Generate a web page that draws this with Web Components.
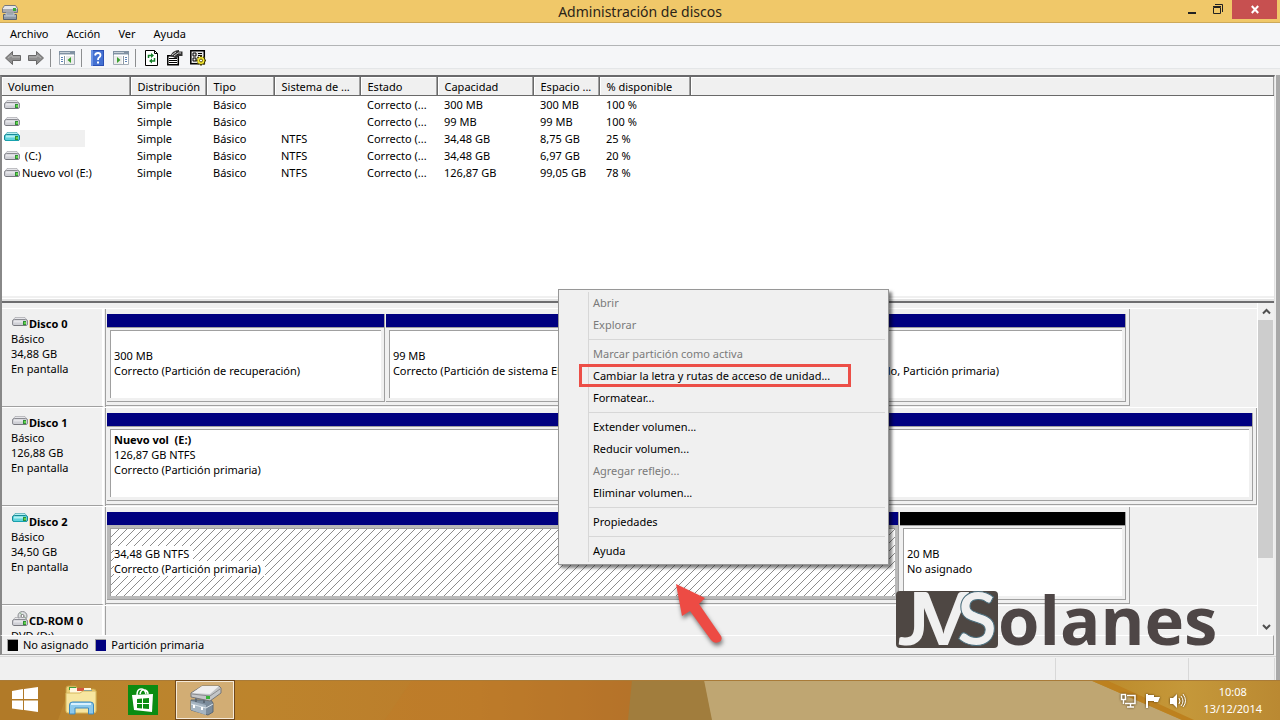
<!DOCTYPE html>
<html lang="es">
<head>
<meta charset="utf-8">
<title>Administración de discos</title>
<style>
html, body { margin: 0; height: 100%; overflow: hidden; }
body { font: 11px/15px "Noto Sans", "Open Sans", sans-serif; color: #000; background: #f0f0f0; }
</style>
</head>
<body>
<disk-manager></disk-manager>
<script>
const define = (name, html, setup) => {
  const t = document.createElement('template');
  t.innerHTML = html;
  customElements.define(name, class extends HTMLElement {
    connectedCallback() {
      if (this.shadowRoot) return;
      this.attachShadow({ mode: 'open' }).append(t.content.cloneNode(true));
      if (setup) setup.call(this, this.shadowRoot);
    }
  });
};

define('drive-icon', `
<style>
:host { display: block; width: 16px; height: 11px; flex: none; --top: #e6e6ea; --front: #cfd0d6; --edge: #8b8c92; --low: #77787e; }
:host([kind="active"]) { --top: #b4f0f2; --front: #5fd3dc; --edge: #168a96; --low: #17a2ae; }
:host([kind="cd"]) { height: 17px; }
svg { display: block; overflow: visible; }
</style><svg></svg>`, function (root) {
  const kind = this.getAttribute('kind');
  const cd = kind === 'cd';
  const svg = root.querySelector('svg');
  svg.setAttribute('width', 16);
  svg.setAttribute('height', cd ? 17 : 11);
  svg.setAttribute('viewBox', cd ? '0 -6 16 17' : kind === 'active' ? '0 2 16 11' : '0 0 16 11');
  svg.innerHTML = `${cd ? '<circle cx="10.500" cy="0" r="4.500" fill="#dcdfe0" stroke="#8a8c90"/><path d="M10.500 0L8-3.500M10.500 0l3.500 2" stroke="#86b98a"/><circle cx="10.500" cy="0" r="1.500" fill="#fff" stroke="#777"/>' : ''}
  <path d="M3 1.500h10l2 3H1z" fill="var(--top)" fill-opacity="${cd ? .6 : 1}" stroke="var(--edge)" stroke-opacity=".5"/>
  <path d="M.5 5q0-1.500 2-1.500h11q2 0 2 1.500v3q0 1.500-1.500 1.500h-12Q.5 9.500.5 8z" fill="var(--front)" stroke="var(--edge)"/>
  <path d="M2 4.500h9v2H2z" fill="var(--top)"/><path d="M2 9.500h12" stroke="var(--low)"/>
  <path d="M11 5h3v4h-3z" fill="#2f8f35"/><path d="M12 6h2v2h-2z" fill="#62d14b"/>`;
});

define('title-bar', `
<style>
:host { display: grid; grid-template-columns: 1fr auto 1fr; height: 22px; background: #f0c869; border-bottom: 1px solid #cda95a; }
h1 { margin: 0; font: 14px/23px "Noto Sans", "Open Sans", sans-serif; color: #2b2418; }
.icon { margin: 4px 0 0 2px; display: block; }
.buttons { display: flex; justify-content: flex-end; align-items: flex-start; padding-right: 3px; }
button { border: 0; padding: 0; width: 26px; height: 19px; background: none; display: block; }
button svg { display: block; margin: auto; }
.close { width: 45px; background: #c75050; margin-left: 1px; }
</style>
<svg class="icon" width="16" height="16" viewBox="0 0 16 16"><path d="M2.500 1.500h11l2 3v4H.5v-4z" fill="#e6e6e8" stroke="#77787c"/><path d="M1 5h14v3H1z" fill="#a9abb0"/><path d="M11 4h3v3h-3z" fill="#38a83a"/><path d="M1.500 10.500h13v5h-13z" fill="#8d98a5" stroke="#59636f"/><path d="M4 9h8v2H4zM2 12h12" fill="#7a8591" stroke="#c2cad2"/></svg>
<h1>Administración de discos</h1>
<div class="buttons">
<button aria-label="Minimizar"><svg width="8" height="17"><path d="M0 11h8v2H0z" fill="#222"/></svg></button>
<button aria-label="Restaurar"><svg width="10" height="19" fill="none" stroke="#222"><path d="M.5 7.500h7v6h-7zM0 6.500h8M2 4.500h7.500V12"/></svg></button>
<button class="close" aria-label="Cerrar"><svg width="8" height="19"><path d="M.8 6l6.400 7M7.200 6L.8 13" stroke="#fff" stroke-width="2"/></svg></button>
</div>`);

define('menu-bar', `
<style>
:host { display: flex; gap: 18px; padding-left: 10px; height: 22px; background: #f5f6f8; border-bottom: 1px solid #b2b4b6; }
button { all: unset; line-height: 22px; }
</style>
<button>Archivo</button><button>Acción</button><button>Ver</button><button>Ayuda</button>`);

define('tool-bar', `
<style>
:host { display: flex; align-items: center; height: 21px; padding: 1px 0 0 5px; background: #f5f6f8; border-bottom: 1px solid #e4e6e8; }
button { all: unset; display: block; min-width: 16px; }
button + button { margin-left: 7px; }
i { width: 1px; height: 18px; background: #8c8e90; margin: 0 8px 0 6px; }
i + button { margin-left: 0; }
svg { display: block; }
</style>
<button aria-label="Atrás"><svg width="16" height="16"><path d="M.5 8L7.500 1.500v4h8v5h-8v4z" fill="#8e8e8e" stroke="#686868"/><path d="M3 8l4-3v2h8" fill="none" stroke="#b5b5b5"/></svg></button>
<button aria-label="Adelante"><svg width="16" height="16"><path d="M15.500 8L8.500 1.500v4h-8v5h8v4z" fill="#8e8e8e" stroke="#686868"/><path d="M13 8L9 5v2H1" fill="none" stroke="#b5b5b5"/></svg></button>
<i></i>
<button aria-label="Mostrar árbol"><svg width="16" height="14"><path d="M.5.5h15v13H.5z" fill="#fff" stroke="#a3acb5"/><path d="M0 0h16v4H0z" fill="#8192a3"/><path d="M1 1.500h10M1 3.500h14" stroke="#c8d0d8"/><path d="M5.500 5v8" stroke="#8b97a3"/><path d="M2 6.500h2M2 8.500h2M2 10.500h2" stroke="#5b82b8"/><path d="M7 5h8v8H7z" fill="#ececec"/><path d="M12 6v6L8.500 9z" fill="#3ba02f"/></svg></button>
<i></i>
<button aria-label="Ayuda"><svg width="14" height="16"><path d="M1 0h13v16H1z" fill="#2a4fb4"/><path d="M2 1h11v14H2z" fill="#4370d2"/><path d="M1 0h2v16H1z" fill="#6a92e4"/><path d="M5 5.500q.5-2.500 3-2.500t2.500 2.300q0 1.500-1.500 2.200-1 .6-1 2.500" fill="none" stroke="#fff" stroke-width="1.800"/><path d="M7 11.500h2v2H7z" fill="#fff"/></svg></button>
<button aria-label="Mostrar panel"><svg width="16" height="14"><path d="M.5.5h15v13H.5z" fill="#fff" stroke="#a3acb5"/><path d="M0 0h16v4H0z" fill="#8192a3"/><path d="M1 1.500h10M1 3.500h14" stroke="#c8d0d8"/><path d="M10.500 5v8" stroke="#8b97a3"/><path d="M12 6.500h2M12 8.500h2M12 10.500h2" stroke="#5b82b8"/><path d="M1 5h8v8H1z" fill="#ececec"/><path d="M4 6v6l3.500-3z" fill="#3ba02f"/></svg></button>
<i></i>
<button aria-label="Actualizar"><svg width="16" height="16"><path d="M1.500.5h9l3 3v12h-12z" fill="#fff" stroke="#000"/><path d="M10.500.5v3h3" fill="none" stroke="#000"/><path d="M4.500 8V5.500h4M10.500 8v3h-4" fill="none" stroke="#15802a" stroke-width="1.500"/><path d="M7 3v5l3-2.500zM8 8.500v5l-3-2.500z" fill="#15802a"/></svg></button>
<button aria-label="Propiedades"><svg width="16" height="16"><path d="M.8 5.800h10.500v9H.8z" fill="#fff" stroke="#000" stroke-width="1.500"/><path d="M2 8.500h8M2 10.500h8M2 12.500h8" stroke="#000"/><path d="M3 6l3-4 3-1.500 3-.5v1.500h3.500V6H12l-3 2.500L6 7z" fill="#333"/><path d="M5 5l4-3M7 6l4-3h3" stroke="#d8d8d8"/></svg></button>
<button aria-label="Configurar"><svg width="16" height="16"><path d="M.8.8h13.500v13H.8z" fill="#e6e6e6" stroke="#000" stroke-width="1.500"/><path d="M3 3h3v3H3zM3 8h3v3H3z" fill="none" stroke="#000"/><path d="M8 3.500h4M8 5.500h4" stroke="#000"/><path d="M11 5.500v10M6 10.500h10M7.500 7l7 7M14.500 7l-7 7" stroke="#4b4200" stroke-width="2"/><circle cx="11" cy="10.500" r="3.500" fill="#f6e934"/><circle cx="11" cy="10.500" r="1.500" fill="#fff" stroke="#5e5400"/></svg></button>`);

const volumes = [
  ['', '', 'Simple', 'Básico', '', 'Correcto (...', '300 MB', '300 MB', '100 %'],
  ['', '', 'Simple', 'Básico', '', 'Correcto (...', '99 MB', '99 MB', '100 %'],
  ['active', '', 'Simple', 'Básico', 'NTFS', 'Correcto (...', '34,48 GB', '8,75 GB', '25 %'],
  ['', '\u00a0(C:)', 'Simple', 'Básico', 'NTFS', 'Correcto (...', '34,48 GB', '6,97 GB', '20 %'],
  ['', 'Nuevo vol (E:)', 'Simple', 'Básico', 'NTFS', 'Correcto (...', '126,87 GB', '99,05 GB', '78 %']
];
define('volume-list', `
<style>
:host { display: flex; flex-direction: column; box-sizing: border-box; min-height: 0; overflow: hidden; background: #fff; border: solid; border-width: 2px 1px 0 2px; border-color: #69696b #e3e3e3 #696969 #888; }
table { width: 100%; border-collapse: collapse; table-layout: fixed; }
th, td { font-weight: 400; text-align: left; padding: 0 0 0 7px; white-space: nowrap; overflow: hidden; height: 17px; line-height: 17px; }
th { padding-top: 1px; background: #f0f0f0; border-right: 1px solid #696969; box-shadow: inset -1px 0 #a0a0a0, inset 1px 1px #fff; border-bottom: 1px solid #696969; }
th:first-child { padding-left: 6px; }
th:last-child { border-right: 0; }
.cell { display: flex; align-items: center; gap: 2px; }
td:first-child { padding-left: 2px; }
.hidden-name { width: 65px; height: 17px; margin-left: -2px; background: #f0f0f0; }
.edge { margin-top: auto; height: 2px; background: #f0f0f0; border-bottom: 1px solid #fff; }
.split { height: 2px; background: #e3e3e3; border-bottom: 2px solid #6d6d6f; }
</style>
<table><colgroup><col style="width:128px"><col style="width:76px"><col style="width:68px"><col style="width:86px"><col style="width:77px"><col style="width:96px"><col style="width:66px"><col style="width:91px"><col></colgroup>
<thead><tr><th>Volumen</th><th>Distribución</th><th>Tipo</th><th>Sistema de ...</th><th>Estado</th><th>Capacidad</th><th>Espacio ...</th><th>% disponible</th><th></th></tr></thead>
<tbody></tbody></table><div class="edge"></div><div class="split"></div>`, function (root) {
  root.querySelector('tbody').innerHTML = volumes.map(([kind, name, ...rest]) =>
    `<tr><td><div class="cell"><drive-icon kind="${kind}"></drive-icon>${kind ? '<span class="hidden-name"></span>' : name}</div></td>${rest.map(v => `<td>${v}</td>`).join('')}<td></td></tr>`).join('');
});

define('disk-row', `
<style>
:host { display: flex; flex: none; height: 98px; border-top: 1px solid #fff; }
.label { flex: none; width: 90px; height: 90px; padding: 7px 0 0 10px; border-right: 2px solid #fff; border-bottom: 1px solid #a0a0a0; }
.info { margin-left: -1px; }
.name { display: flex; align-items: flex-start; gap: 1px; font-weight: 700; white-space: nowrap; height: 15px; }
.area { flex: 1; min-width: 0; overflow: hidden; border-left: 1px solid #a0a0a0; margin-left: 1px; }
.frame { display: flex; box-sizing: border-box; height: 97px; padding: 5px 3px 3px 1px; gap: 1px; border: solid #a0a0a0; border-width: 0 1px 1px 0; width: var(--share, 100%); }
:host([empty]) .frame { display: none; }
:host([kind="cd"]) drive-icon { margin-top: -3px; }
</style>
<div class="label"><div class="name"></div><div class="info"><slot name="info"></slot></div></div>
<div class="area"><div class="frame"><slot></slot></div></div>`, function (root) {
  root.querySelector('.name').innerHTML = `<drive-icon kind="${this.getAttribute('kind') || ''}"></drive-icon><span>${this.getAttribute('name')}</span>`;
});

define('disk-partition', `
<style>
:host { display: flex; flex-direction: column; flex: var(--size, 1) 1 0; min-width: 0; border: solid #a0a0a0; border-width: 0 1px 1px 0; }
.bar { height: 13px; background: #000080; border-bottom: 1px solid #a0a0a0; flex: none; }
:host([unallocated]) .bar { background: #000; }
.box { position: relative; flex: 1; margin: 2px 3px 3px; border: solid #a0a0a0; border-width: 1px 0 0 1px; background: #fff; padding: 2px 0 0 3px; overflow: hidden; white-space: pre; }
svg { display: none; position: absolute; inset: 0; width: 100%; height: 100%; }
:host([selected]) .bar { border-color: #b4b4b4; }
:host([selected]) { background: #b9b9b9; }
:host([selected]) svg { display: block; }
.text { position: relative; }
.line { height: 15px; }
.line span { background: #fff; display: inline-block; padding-right: 4px; }
.line.bold { font-weight: 700; }
</style>
<div class="bar"></div>
<div class="box"><svg><defs><pattern id="hatch" width="8" height="8" patternUnits="userSpaceOnUse"><path d="M0 7h1v1H0zM1 6h1v1H1zM2 5h1v1H2zM3 4h1v1H3zM4 3h1v1H4zM5 2h1v1H5zM6 1h1v1H6zM7 0h1v1H7z" fill="#8c8c8c" shape-rendering="crispEdges"/></pattern></defs><rect width="100%" height="100%" fill="url(#hatch)"/></svg><div class="text"></div></div>`, function (root) {
  root.querySelector('.text').innerHTML = ['name', 'size', 'state'].map((k) =>
    `<div class="line${k === 'name' ? ' bold' : ''}"><span>${this.getAttribute(k) || ''}</span></div>`).join('');
});

define('scroll-bar', `
<style>
:host { display: flex; flex-direction: column; width: 16px; flex: none; border-left: 1px solid #fff; background: #f0f0f0; }
button { all: unset; height: 17px; flex: none; }
svg { display: block; margin: auto; }
.track { flex: 1; }
.thumb { height: 80%; margin-right: 1px; background: #cdcdcd; }
</style>
<button aria-label="Subir"><svg width="9" height="17"><path d="M1 10.500L4.500 7 8 10.500" fill="none" stroke="#505050" stroke-width="2"/></svg></button>
<div class="track"><div class="thumb"></div></div>
<button aria-label="Bajar"><svg width="9" height="17"><path d="M1 7l3.500 3.500L8 7" fill="none" stroke="#505050" stroke-width="2"/></svg></button>`);

define('disk-view', `
<style>
:host { display: flex; min-height: 0; border: solid; border-width: 0 2px; border-color: #888; border-right-color: #ececec; }
.rows { flex: 1; min-width: 0; overflow: hidden; padding-top: 5px; display: flex; flex-direction: column; }
p { margin: 0; }
</style>
<div class="rows">
<disk-row name="Disco 0" style="--share:89%"><p slot="info">Básico</p><p slot="info">34,88 GB</p><p slot="info">En pantalla</p>
<disk-partition style="--size:279" size="300 MB" state="Correcto (Partición de recuperación)"></disk-partition>
<disk-partition style="--size:238" size="99 MB" state="Correcto (Partición de sistema EFI)"></disk-partition>
<disk-partition style="--size:505" state="Correcto (Arranque, Archivo de paginación, Volcado, Partición primaria)"></disk-partition></disk-row>
<disk-row name="Disco 1" style="--share:100%"><p slot="info">Básico</p><p slot="info">126,88 GB</p><p slot="info">En pantalla</p>
<disk-partition name="Nuevo vol  (E:)" size="126,87 GB NTFS" state="Correcto (Partición primaria)"></disk-partition></disk-row>
<disk-row name="Disco 2" kind="active" style="--share:89%"><p slot="info">Básico</p><p slot="info">34,50 GB</p><p slot="info">En pantalla</p>
<disk-partition selected style="--size:793" size="34,48 GB NTFS" state="Correcto (Partición primaria)"></disk-partition>
<disk-partition unallocated style="--size:226" size="20 MB" state="No asignado"></disk-partition></disk-row>
<disk-row name="CD-ROM 0" kind="cd" empty><p slot="info">DVD (D:)</p></disk-row>
</div>
<scroll-bar></scroll-bar>`);

define('disk-legend', `
<style>
:host { display: flex; align-items: center; gap: 5px; padding: 0 0 1px 5px; height: 17px; margin-right: 2px; border: solid; border-width: 1px 1px 1px 2px; border-color: #fff #a0a0a0 #a0a0a0 #888; }
i { width: 10px; height: 11px; background: #000; border: solid #a0a0a0; border-width: 1px 0 0 1px; }
.primary { background: #000080; margin-left: 2px; }
</style>
<i></i><span>No asignado</span><i class="primary"></i><span>Partición primaria</span>`);

define('status-bar', `
<style>
:host { display: flex; justify-content: flex-end; height: 22px; margin-top: 1px; padding: 1px 1px 0 0; border-top: 1px solid #d8d8d8; }
i { border-left: 1px solid #d8d8d8; width: 132px; }
i + i { width: 85px; border-right: 1px solid #d8d8d8; }
</style><i></i><i></i>`);

define('context-menu', `
<style>
:host { display: block; position: absolute; left: 558px; top: 289px; width: 329px; padding: 2px 0; background: #f0f0f0; border: 1px solid #979797; box-shadow: 3px 3px 3px rgba(0,0,0,.5); }
.list { background: linear-gradient(90deg, transparent 29px, #d7d7d7 29px, #d7d7d7 30px, transparent 30px); }
button { all: unset; display: block; box-sizing: border-box; width: 100%; height: 22px; line-height: 20px; padding-left: 34px; position: relative; white-space: nowrap; }
button:disabled { color: #7a7a7a; }
hr { height: 1px; margin: 3px 3px 3px 30px; border: 0; background: #d7d7d7; }
.marked::after { content: ""; position: absolute; left: 20px; top: -1px; width: 266px; height: 17px; border: 3px solid #ec4e47; }
</style>
<div class="list">
<button disabled>Abrir</button><button disabled>Explorar</button><hr>
<button disabled>Marcar partición como activa</button><button class="marked">Cambiar la letra y rutas de acceso de unidad...</button><button>Formatear...</button><hr>
<button>Extender volumen...</button><button>Reducir volumen...</button><button disabled>Agregar reflejo...</button><button>Eliminar volumen...</button><hr>
<button>Propiedades</button><hr><button>Ayuda</button>
</div>`);

define('pointer-arrow', `
<style>:host { display: block; position: absolute; left: 670px; top: 580px; filter: drop-shadow(1px 3px 2px rgba(0,0,0,.5)); } svg { display: block; }</style>
<svg width="56" height="66"><path d="M6 4L35 18 29 24 51 56Q53 60 49 62 44 64 41 60L20 31 12 36z" fill="#ed4b44"/></svg>`);

define('brand-logo', `
<style>:host { display: block; position: absolute; left: 894px; top: 586px; } svg { display: block; overflow: visible; }
text { font: 700 67px "Open Sans", sans-serif; fill: #4e4646; }
.mark text { fill: #f0f0f0; font: 700 73px Lato, sans-serif; }
.mark .s { stroke: #4a6d7c; stroke-width: 1; }</style>
<svg width="326" height="66"><rect x="2" y="5" width="102" height="57" rx="4" fill="#4e4743"/>
<g class="mark"><text x="4" y="59">J</text><text x="24" y="59">V</text><text class="s" x="63" y="59">S</text></g>
<text x="104" y="59">olanes</text></svg>`);

define('task-bar', `
<style>
:host { display: flex; position: relative; height: 40px; flex: none; align-items: center; color: #fff; overflow: hidden; }
.wall { position: absolute; inset: 0; width: 100%; height: 100%; }
.apps, .tray { position: relative; display: flex; align-items: center; }
.tray { margin-left: auto; padding-right: 18px; gap: 8px; }
button { all: unset; display: flex; align-items: center; justify-content: center; }
.start { width: 50px; } .pin { width: 62px; }
.open { box-sizing: border-box; width: 60px; height: 40px; margin-left: 1px; border: 1px solid #70481b; box-shadow: inset 0 0 0 1px #f6ead8; background: #d2ad74; }
.tray svg { filter: drop-shadow(0 0 1px #4d3510); margin-top: 1px; }
time { text-align: center; line-height: 17px; margin-left: 9px; }
time span { display: block; }
</style>
<svg class="wall" viewBox="0 0 1280 40" preserveAspectRatio="none">
<defs><linearGradient id="w"><stop offset="0" stop-color="#b9842f"/><stop offset=".4" stop-color="#bd842c"/><stop offset=".75" stop-color="#bb7c2b"/><stop offset="1" stop-color="#ad6d2b"/></linearGradient>
<linearGradient id="g"><stop offset="0" stop-color="#bb8929"/><stop offset=".5" stop-color="#c5983a"/><stop offset="1" stop-color="#ba8932"/></linearGradient></defs>
<path d="M0 0h640v40H0z" fill="url(#w)"/><path d="M0 0h72L58 40H0z" fill="#b17a28"/><path d="M412 0h220v40H385z" fill="#c07a28" opacity=".4"/>
<path d="M632 0h75l6 40h-85z" fill="#a17d3d"/><path d="M704 0h576v40H712z" fill="#bfa672"/>
<path d="M1090 0h190v40h-98z" fill="url(#g)"/><path d="M1090 0h16l88 40h-12z" fill="#bd811f"/><path d="M0 .5h1280" stroke="#a97b38"/></svg>
<div class="apps">
<button class="start" aria-label="Inicio"><svg width="28" height="26"><path d="M1 4l11-2v10H1zM13 2l14-2v12H13zM1 13.500h11V23L1 21.500zM13 13.500h14V25l-14-2z" fill="#fff"/></svg></button>
<button class="pin" aria-label="Explorador"><svg width="32" height="32"><path d="M1 4q0-2 2-2h8l2 3h16q2 0 2 2v20H1z" fill="#ecd078" stroke="#bd9840"/><path d="M4 3h7v3H4z" fill="#3e9e3b"/><path d="M5 4h21v6H5z" fill="#fff8e0"/><path d="M12 4h7v3h-7z" fill="#d4573e"/><path d="M19 6h8v3h-8z" fill="#3e8ed0"/><path d="M1 9h14l3-2h13v20q0 2-2 2H3q-2 0-2-2z" fill="#f7e6a0" stroke="#d6b75d"/><path d="M4.500 30V21q0-3 3-3h18q3 0 3 3v9h-5v-6H10v6z" fill="#8cc9eb" stroke="#3f89bd"/><path d="M6 20h20" stroke="#d8f1ff" stroke-width="2"/></svg></button>
<button class="pin" aria-label="Tienda"><svg width="30" height="30"><path d="M0 0h30v30H0z" fill="#0b8c12"/><path d="M4 10l21-1-1 18-18-2z" fill="#fff"/><path d="M9 10q0-6 4-6t5 5M12 9q1-5 5-4 3 1 3 4" fill="none" stroke="#fff" stroke-width="1.500"/><path d="M9 14l5-.5v4.500H9zM15 13.500l6-.5v5h-6zM9 19h5v4.500L9 23zM15 19h6v5l-6-.5z" fill="#0b8c12"/></svg></button>
<button class="open" aria-label="Administración de discos"><svg width="34" height="32"><path d="M3 16h20l2 3v9l-5 3-17-5z" fill="#7c8c9b" stroke="#5b6874"/><path d="M3 17l15 4v10L3 26z" fill="#a6b5c2"/><path d="M8 18v-3q0-2 8 0v4" fill="none" stroke="#5d6975" stroke-width="2"/><path d="M3 20l15 4 7-4" fill="none" stroke="#dce4ea"/><path d="M6 21v3M14 23v3" stroke="#fff" stroke-width="2"/><path d="M3 9L14 2h17l2 2v5L22 17 3 13z" fill="#c3c5c8" stroke="#777"/><path d="M4 9L14 2h17l-9 8z" fill="#eeeeef"/><path d="M4 10l18 2 10-7" fill="none" stroke="#8a8b8e"/><path d="M18 12h4v3h-4z" fill="#37b336"/></svg></button>
</div>
<div class="tray">
<svg width="17" height="16" fill="none" stroke="#fff" stroke-width="1.500"><path d="M1.500 1.500h4v5h-4zM3.500 7v4M7 2.500h8v8H5M10.500 11v2.500M7 14h7"/></svg>
<svg width="16" height="16"><path d="M2 1v14" stroke="#fff" stroke-width="2"/><path d="M3 2h6v2h6l-2 5H9V8H3z" fill="#fff"/></svg>
<svg width="17" height="16"><path d="M1 5h3l4-4v14l-4-4H1z" fill="#fff"/><path d="M10 5q2 3 0 6M12 3q4 5 0 10M14 1q5 7 0 13" fill="none" stroke="#fff" stroke-width="1"/></svg>
<time><span>10:08</span><span>13/12/2014</span></time>
</div>`);

define('disk-manager', `
<style>
:host { display: flex; flex-direction: column; height: 100vh; position: relative; overflow: hidden; }
.content { display: flex; flex-direction: column; flex: 1; min-height: 0; margin-top: 6px; border-right: 4px solid #a9a9a9; }
volume-list { flex: 226 0 0; margin-right: 1px; }
disk-view { flex: 332 0 0; }
</style>
<title-bar></title-bar><menu-bar></menu-bar><tool-bar></tool-bar>
<div class="content"><volume-list></volume-list><disk-view></disk-view><disk-legend></disk-legend><status-bar></status-bar></div>
<task-bar></task-bar>
<context-menu></context-menu><pointer-arrow></pointer-arrow><brand-logo></brand-logo>`);
</script>
</body>
</html>
